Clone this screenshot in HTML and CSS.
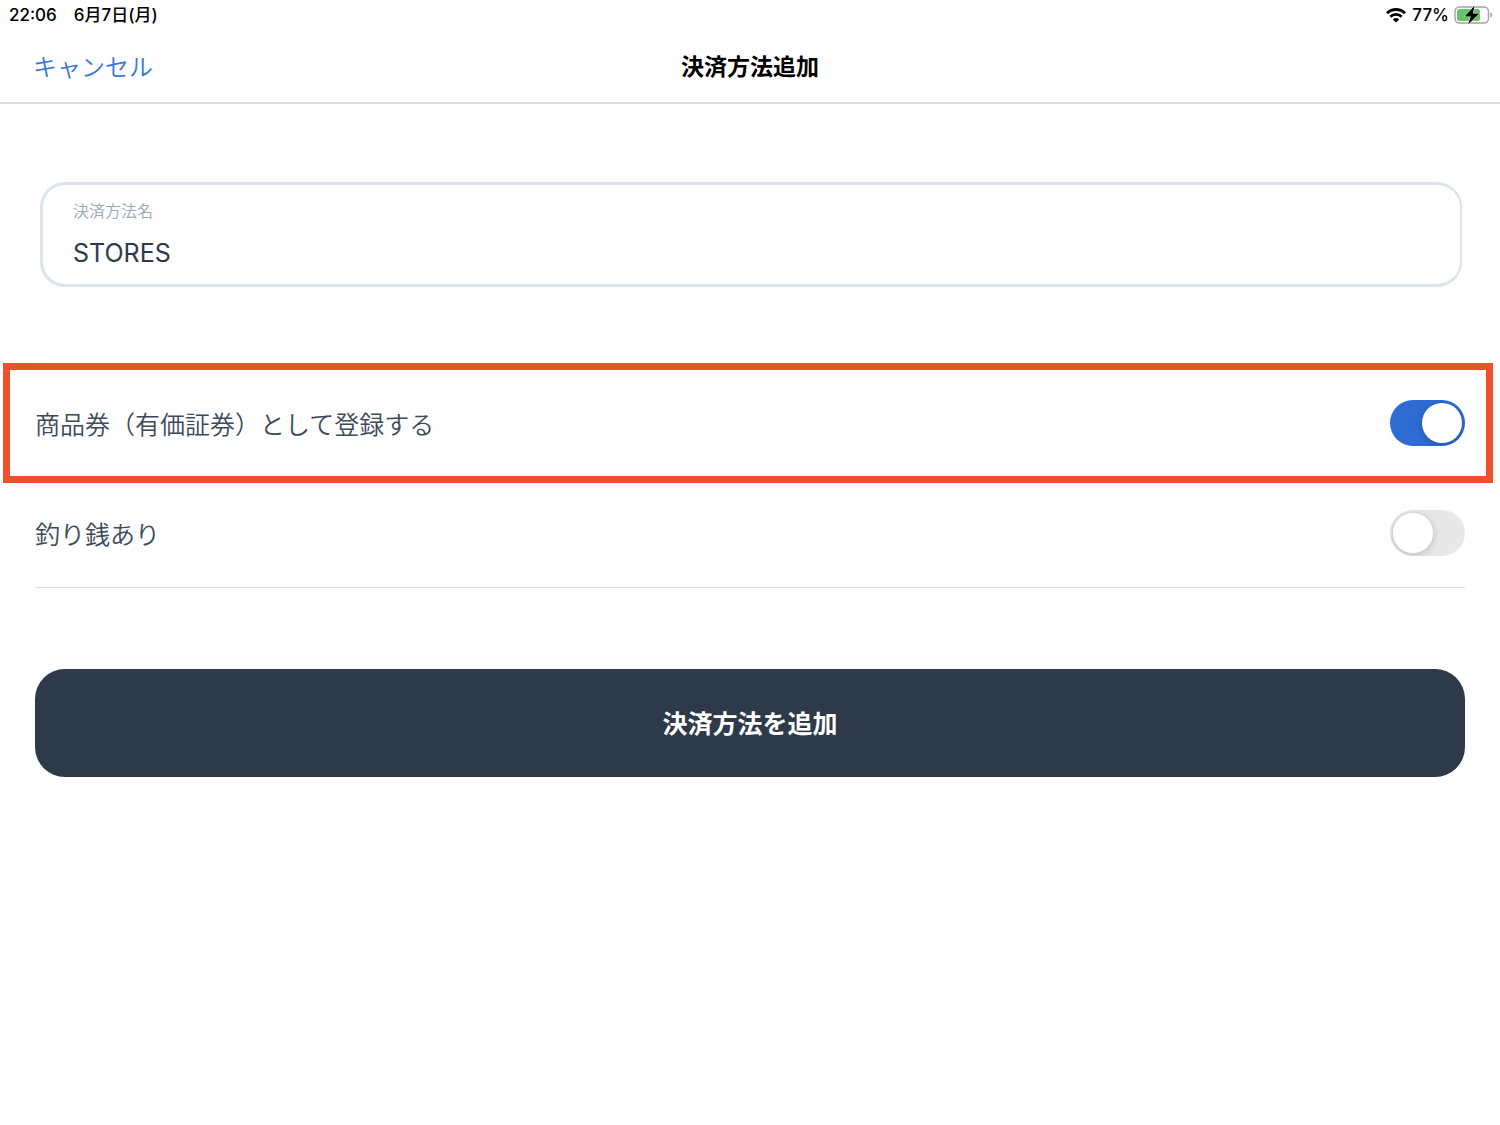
FILE: index.html
```html
<!DOCTYPE html>
<html lang="ja">
<head>
    <meta charset="UTF-8">
    <meta name="viewport" content="width=device-width, initial-scale=1.0">
    <title>決済方法追加</title>
    <link rel="stylesheet" href="styles.css">
</head>
<body>

    <!-- ステータスバー -->
    <div class="status-bar">
        <div class="status-left">
            <span>22:06</span>
            <span>6月7日(月)</span>
        </div>
        <div class="status-right">
            <svg class="wifi" viewBox="0 0 20 15" width="20" height="15" aria-hidden="true">
                <path d="M1 5.2a12.8 12.8 0 0 1 18 0" fill="none" stroke="#000" stroke-width="2.8"/>
                <path d="M4.3 8.7a8.2 8.2 0 0 1 11.4 0" fill="none" stroke="#000" stroke-width="2.6"/>
                <path d="M10 14.6 6.8 11.4a4.6 4.6 0 0 1 6.4 0z" fill="#000"/>
            </svg>
            <span class="percent">77%</span>
            <svg class="battery" viewBox="0 0 40 20" width="40" height="20" aria-hidden="true">
                <rect x="1" y="2" width="33.5" height="16" rx="4.5" fill="none" stroke="#a3a3a5" stroke-width="1.4"/>
                <rect x="3" y="4" width="23" height="12" rx="2.5" fill="#65c466"/>
                <path d="M36.3 7.2v5.600c1.200-.5 1.900-1.600 1.900-2.800s-.7-2.300-1.900-2.800z" fill="#a3a3a5"/>
                <path d="M20.600.8 10.600 11.400h6.200L14 19.400 25.400 8.500h-6.500z" fill="#000" stroke="#fefefe" stroke-width="1" paint-order="stroke"/>
            </svg>
        </div>
    </div>

    <!-- ナビゲーション -->
    <header class="nav">
        <a class="cancel" href="#">キャンセル</a>
        <h1>決済方法追加</h1>
    </header>

    <form class="payment-form">
        <div class="field">
            <label for="name">決済方法名</label>
            <input type="text" id="name" name="name" value="STORES">
        </div>

        <div class="row highlight">
            <label for="voucher">商品券（有価証券）として登録する</label>
            <input type="checkbox" class="switch" id="voucher" name="voucher" checked>
        </div>
        <div class="row">
            <label for="change">釣り銭あり</label>
            <input type="checkbox" class="switch" id="change" name="change">
        </div>

        <button type="submit" class="submit-btn">決済方法を追加</button>
    </form>

</body>
</html>
```

FILE: styles.css
```css
* {
    box-sizing: border-box;
}

body {
    font-family: Inter, "Noto Sans CJK JP", sans-serif;
    background: #fefefe;
    color: #3d4a5b;
    margin: 0;
}

/* ステータスバー */
.status-bar {
    display: flex;
    justify-content: space-between;
    align-items: center;
    height: 30px;
    padding: 0 6px 0 9px;
    color: #000;
    font-size: 17px;
    font-weight: 500;
    line-height: 30px;
}

.status-left {
    display: flex;
    gap: 17px;
}

.status-right {
    display: flex;
    align-items: center;
}

.percent {
    margin: 0 5px 0 6px;
}

/* ナビゲーション */
.nav {
    display: grid;
    grid-template-columns: 1fr auto 1fr;
    align-items: center;
    height: 74px;
    padding: 0 33px 2px;
    border-bottom: 2px solid #dddddf;
}

.cancel {
    color: #3577dc;
    font-size: 24px;
    font-weight: 350;
    text-decoration: none;
}

.nav h1 {
    margin: 0;
    color: #000;
    font-size: 23px;
    font-weight: 600;
}

/* フォーム */
.field {
    display: flex;
    flex-direction: column;
    height: 105px;
    margin: 78px 38px 76px 40px;
    padding: 14px 30px;
    border: 3px solid #dae3ee;
    border-right-width: 2px;
    border-radius: 25px;
}

.field label {
    color: #9aa9bd;
    font-size: 16px;
    font-weight: 350;
    line-height: 24px;
}

.field input {
    margin-top: 14px;
    padding: 0;
    border: 0;
    outline: 0;
    background: none;
    color: #2d3a4a;
    font-family: inherit;
    font-size: 25px;
    line-height: 32px;
}

.row {
    display: flex;
    justify-content: space-between;
    align-items: center;
    height: 105px;
    margin: 0 35px;
    padding-bottom: 4px;
    border-bottom: 1px solid #dcdcdd;
    font-size: 25px;
    font-weight: 350;
}

.row.highlight {
    height: 120px;
    margin: 0 7px 0 3px;
    padding: 0 21px 0 25px;
    border: 7px solid #ec512d;
}

.switch {
    appearance: none;
    width: 75px;
    height: 46px;
    margin: 0;
    padding: 3px;
    border-radius: 23px;
    background: #e8e8e8;
    overflow: hidden;
    cursor: pointer;
}

.switch::before {
    content: "";
    display: block;
    width: 40px;
    height: 40px;
    border-radius: 50%;
    background: #fff;
    box-shadow: 0 2px 8px rgba(0, 0, 0, 0.2);
}

.switch:checked {
    background: #2e6bd3;
}

.switch:checked::before {
    margin-left: auto;
}

.submit-btn {
    display: block;
    width: calc(100% - 70px);
    height: 108px;
    margin: 81px 35px 0;
    padding: 0 0 2px;
    border: 0;
    border-radius: 30px;
    background: #2e3a4a;
    color: #fff;
    font-family: inherit;
    font-size: 25px;
    font-weight: 600;
    cursor: pointer;
}
```
